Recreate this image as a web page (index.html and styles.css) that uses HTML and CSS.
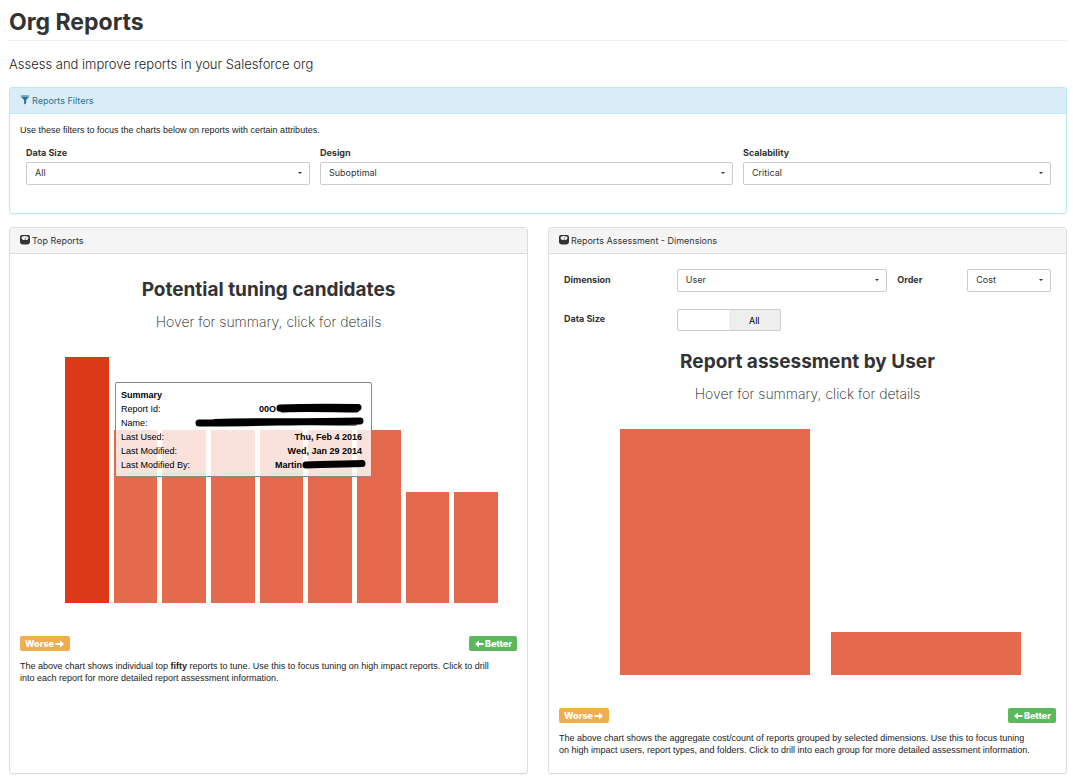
FILE: index.html
```html
<!DOCTYPE html>
<html lang="en">
<head>
<meta charset="utf-8">
<title>Org Reports</title>
<link rel="stylesheet" href="styles.css">
</head>
<body>
<svg class="symbols" aria-hidden="true">
  <symbol id="scale" viewBox="0 0 20 20">
    <path fill="currentColor" fill-rule="evenodd" d="M4 0h12a4 4 0 0 1 4 4v9a6 6 0 0 1-6 6H6a6 6 0 0 1-6-6V4a4 4 0 0 1 4-4zM3 5c0 3 2 5 4 5h6c2 0 4-2 4-5 0-1-3-3-7-3S3 4 3 5z"/>
    <path fill="none" stroke="currentColor" stroke-width="1.2" d="M9.500 10L12 5"/>
  </symbol>
  <symbol id="right" viewBox="0 0 18 16"><path fill="currentColor" d="M0 6h9V1l8 7-8 7v-5H0z"/></symbol>
  <symbol id="left" viewBox="0 0 18 16"><path fill="currentColor" d="M18 6H9V1L1 8l8 7v-5h9z"/></symbol>
</svg>
<header>
  <h1 class="page-title">Org Reports</h1>
  <p class="lead">Assess and improve reports in your Salesforce org</p>
</header>
<main>
  <section class="panel panel-info">
    <h2 class="panel-heading">
      <svg class="icon" viewBox="0 0 20 22" aria-hidden="true"><path fill="#7fb0cc" d="M1 0h18v4H1z"/><path fill="currentColor" d="M1 4h18l-6.500 7v7L8 21V11z"/></svg>
      Reports Filters
    </h2>
    <div class="panel-body filters-body">
      <p class="text">Use these filters to focus the charts below on reports with certain attributes.</p>
      <form class="filters">
        <div class="field">
          <label for="size">Data Size</label>
          <div class="picker"><select id="size"><option>All</option></select></div>
        </div>
        <div class="field">
          <label for="design">Design</label>
          <div class="picker"><select id="design"><option>Suboptimal</option></select></div>
        </div>
        <div class="field">
          <label for="scalability">Scalability</label>
          <div class="picker"><select id="scalability"><option>Critical</option></select></div>
        </div>
      </form>
    </div>
  </section>

  <div class="columns">
    <section class="panel">
      <h2 class="panel-heading"><svg class="icon" aria-hidden="true"><use href="#scale"/></svg> Top Reports</h2>
      <div class="panel-body">
        <h3 class="chart-title">Potential tuning candidates</h3>
        <p class="chart-hint">Hover for summary, click for details</p>
        <div class="chart chart-top">
          <div class="bar bar-active" style="height:100%"></div>
          <div class="bar" style="height:70.300%"></div>
          <div class="bar" style="height:70.300%"></div>
          <div class="bar" style="height:70.300%"></div>
          <div class="bar" style="height:70.300%"></div>
          <div class="bar" style="height:70.300%"></div>
          <div class="bar" style="height:70.300%"></div>
          <div class="bar" style="height:45.100%"></div>
          <div class="bar" style="height:45.100%"></div>
          <div class="tooltip" role="tooltip">
            <strong>Summary</strong>
            <dl class="summary">
              <dt>Report Id:</dt>
              <dd>00O<svg class="ink ink-id" viewBox="0 0 86 10" aria-hidden="true"><path d="M4 5C28 4 55 4 82 4.500M7 6C30 5 60 6 80 6"/></svg></dd>
              <dt>Name:</dt>
              <dd><svg class="ink ink-name" viewBox="0 0 170 10" aria-hidden="true"><path d="M4 6C50 6 100 4.500 165 4M20 5.500C60 4 110 5 160 5"/></svg></dd>
              <dt>Last Used:</dt>
              <dd>Thu, Feb 4 2016</dd>
              <dt>Last Modified:</dt>
              <dd>Wed, Jan 29 2014</dd>
              <dt>Last Modified By:</dt>
              <dd>Martin<svg class="ink ink-by" viewBox="0 0 64 10" aria-hidden="true"><path d="M4 6C22 5 42 5 60 4.500"/></svg></dd>
            </dl>
          </div>
        </div>
        <div class="legend">
          <span class="badge badge-worse">Worse <svg class="arrow" aria-hidden="true"><use href="#right"/></svg></span>
          <span class="badge badge-better"><svg class="arrow" aria-hidden="true"><use href="#left"/></svg> Better</span>
        </div>
        <p class="text">The above chart shows individual top <strong>fifty</strong> reports to tune. Use this to focus tuning on high impact reports. Click to drill into each report for more detailed report assessment information.</p>
      </div>
    </section>

    <section class="panel">
      <h2 class="panel-heading"><svg class="icon" aria-hidden="true"><use href="#scale"/></svg> Reports Assessment - Dimensions</h2>
      <div class="panel-body assessment">
        <form class="options">
          <label for="dimension">Dimension</label>
          <div class="picker"><select id="dimension"><option>User</option></select></div>
          <label for="order">Order</label>
          <div class="picker"><select id="order"><option>Cost</option></select></div>
          <label for="all">Data Size</label>
          <button class="switch" id="all" type="button" role="switch" aria-checked="false"><span class="switch-handle"></span><span class="switch-off">All</span></button>
        </form>
        <h3 class="chart-title">Report assessment by User</h3>
        <p class="chart-hint">Hover for summary, click for details</p>
        <div class="chart chart-user">
          <div class="bar" style="height:100%"></div>
          <div class="bar" style="height:17.500%"></div>
        </div>
        <div class="legend">
          <span class="badge badge-worse">Worse <svg class="arrow" aria-hidden="true"><use href="#right"/></svg></span>
          <span class="badge badge-better"><svg class="arrow" aria-hidden="true"><use href="#left"/></svg> Better</span>
        </div>
        <p class="text">The above chart shows the aggregate cost/count of reports grouped by selected dimensions. Use this to focus tuning on high impact users, report types, and folders. Click to drill into each group for more detailed assessment information.</p>
      </div>
    </section>
  </div>
</main>
</body>
</html>
```
FILE: styles.css
```css
* { box-sizing: border-box; }
body {
  margin: 0;
  padding: 8px 6px 8px 9px;
  background: #fff;
  color: #333;
  font-family: Inter, "Liberation Sans", Arial, sans-serif;
  font-size: 9px;
  line-height: 12px;
}
h1, h2, h3, p, dl, dd { margin: 0; }
.symbols { display: none; }
.page-title {
  padding: 1px 0 4px;
  border-bottom: 1px solid #eee;
  font-size: 23px;
  font-weight: 700;
  line-height: 27px;
}
.lead {
  margin: 13px 0;
  color: #222;
  font-size: 13px;
  font-weight: 300;
  line-height: 20px;
}
.panel {
  border: 1px solid #ddd;
  border-radius: 3px;
  box-shadow: 0 1px 1px rgba(0, 0, 0, .05);
}
.panel-heading {
  display: flex;
  gap: 2px;
  padding: 7px 10px 6px;
  border-bottom: 1px solid #ddd;
  background: #f5f5f5;
  font-size: 9px;
  font-weight: 400;
  line-height: 12px;
}
.icon { width: 10px; height: 10px; }
.panel-info { border-color: #bce8f1; }
.panel-info .panel-heading {
  border-color: #bce8f1;
  background: #d9edf7;
  color: #31708f;
}
.panel-body { padding: 10px; }
.text {
  padding-right: 22px;
  color: #222;
  font-family: "Liberation Sans", Arial, sans-serif;
}
.filters-body { padding-bottom: 28px; }
.filters {
  display: grid;
  grid-template-columns: 284fr 413fr 308fr;
  gap: 10px;
  margin: 11px 5px 0 6px;
}
label { display: block; font-weight: 700; }
.field label { margin-bottom: 3px; }
.picker { position: relative; }
.picker::after {
  content: "";
  position: absolute;
  top: 10px;
  right: 8px;
  border: 2px solid transparent;
  border-top-color: #333;
  border-bottom: 0;
  pointer-events: none;
}
select {
  display: block;
  width: 100%;
  height: 23px;
  padding: 0 8px 2px;
  border: 1px solid #ccc;
  border-radius: 2px;
  background: #fff;
  color: #333;
  font: inherit;
  appearance: none;
}
.columns {
  display: grid;
  grid-template-columns: 1fr 1fr;
  gap: 20px;
  margin-top: 13px;
}
.chart-title {
  margin-top: 14px;
  font-size: 19px;
  font-weight: 700;
  line-height: 24px;
  text-align: center;
}
.chart-hint {
  margin-top: 10px;
  color: #111;
  font-size: 14px;
  font-weight: 200;
  line-height: 20px;
  text-align: center;
}
.chart {
  position: relative;
  display: flex;
  align-items: flex-end;
  height: 246px;
}
.chart-top { gap: 5px; margin: 25px 19px 0 45px; }
.chart-user { gap: 21px; margin: 25px 35px 0 61px; }
.bar { flex: 1; background: #e5694c; }
.bar-active { background: #dc3918; }
.tooltip {
  position: absolute;
  top: 25px;
  left: 50px;
  width: 257px;
  padding: 5px 9px 4px 5px;
  border: 1px solid #888;
  border-radius: 2px;
  background: rgba(255, 255, 255, .8);
  color: #000;
  font-family: "Liberation Sans", Arial, sans-serif;
  line-height: 14px;
}
.tooltip > strong { display: block; }
.summary {
  display: grid;
  grid-template-columns: auto 1fr;
}
.summary dd {
  display: flex;
  justify-content: flex-end;
  height: 14px;
  font-weight: 700;
}
.ink {
  flex: none;
  height: 10px;
  margin-top: 1px;
  fill: none;
  stroke: #000;
  stroke-width: 7;
  stroke-linecap: round;
}
.ink-id { width: 86px; }
.ink-name { width: 170px; margin-right: -3px; }
.ink-by { width: 64px; margin-right: -4px; }
.legend {
  display: flex;
  justify-content: space-between;
  margin: 33px 0 9px;
}
.badge {
  display: flex;
  align-items: center;
  gap: 1px;
  height: 15px;
  padding: 0 5px;
  border-radius: 2px;
  color: #fff;
  font-weight: 800;
}
.badge-worse { background: #f0ad4e; }
.badge-better { background: #5cb85c; }
.arrow { width: 10px; height: 8px; }
.assessment { padding-bottom: 17px; }
.options {
  display: grid;
  grid-template-columns: 103fr 211fr 60fr 84fr;
  align-items: center;
  gap: 17px 10px;
  margin: 5px 5px 19px;
}
.options label { padding-bottom: 2px; }
.switch {
  display: grid;
  grid-template-columns: 1fr 1fr;
  width: 104px;
  height: 22px;
  padding: 0;
  overflow: hidden;
  border: 1px solid #ccc;
  border-radius: 2px;
  background: #fff;
  color: #000;
  font: inherit;
}
.switch-off {
  height: 20px;
  background: #eee;
  line-height: 22px;
}
```
